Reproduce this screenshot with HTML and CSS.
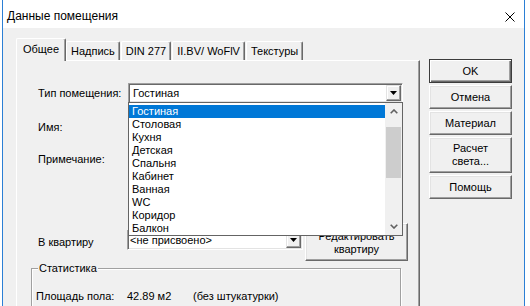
FILE: index.html
```html
<!DOCTYPE html>
<html>
<head>
  <meta charset="UTF-8" />
  <title>Данные помещения</title>
  <link rel="stylesheet" href="styles.css">
</head>
<body>
<div class="window">
  <!-- Title bar -->
  <div class="titlebar">
    <span class="title">Данные помещения</span>
    <span class="close">
      <svg width="10" height="10" viewBox="0 0 10 10"><path d="M0.5 0.5L9.5 9.5M9.5 0.5L0.5 9.5" stroke="#000" stroke-width="1" fill="none"/></svg>
    </span>
  </div>

  <div class="dialog">
    <div class="main">
      <!-- Tabs -->
      <div class="tabs">
        <div class="tab active">Общее</div>
        <div class="tab">Надпись</div>
        <div class="tab">DIN 277</div>
        <div class="tab">II.BV/ WoFlV</div>
        <div class="tab">Текстуры</div>
      </div>

      <!-- Tab page -->
      <div class="panel">
        <div class="row row-type">
          <label>Тип помещения:</label>
          <div class="combo combo-type">
            <span class="combo-text">Гостиная</span>
            <span class="combo-btn">
              <svg width="7" height="4" viewBox="0 0 7 4"><path d="M0 0H7L3.5 4Z" fill="#000"/></svg>
            </span>

            <!-- Open drop-down list -->
            <div class="dropdown">
              <ul class="options">
                <li class="selected">Гостиная</li>
                <li>Столовая</li>
                <li>Кухня</li>
                <li>Детская</li>
                <li>Спальня</li>
                <li>Кабинет</li>
                <li>Ванная</li>
                <li>WC</li>
                <li>Коридор</li>
                <li>Балкон</li>
              </ul>
              <div class="scrollbar">
                <span class="sb-arrow">
                  <svg width="8" height="5" viewBox="0 0 8 5"><path d="M0.7 4.3L4 1L7.3 4.3" fill="none" stroke="#606060" stroke-width="1.6"/></svg>
                </span>
                <span class="sb-track"><span class="sb-thumb"></span></span>
                <span class="sb-arrow">
                  <svg width="8" height="5" viewBox="0 0 8 5"><path d="M0.7 0.7L4 4L7.3 0.7" fill="none" stroke="#606060" stroke-width="1.6"/></svg>
                </span>
              </div>
            </div>
          </div>
        </div>

        <div class="row row-name">
          <label>Имя:</label>
          <div class="edit edit-name"></div>
        </div>

        <div class="row row-note">
          <label>Примечание:</label>
          <div class="edit edit-note"></div>
        </div>

        <div class="row row-flat">
          <label>В квартиру</label>
          <div class="combo combo-flat">
            <span class="combo-text">&lt;не присвоено&gt;</span>
            <span class="combo-btn">
              <svg width="7" height="4" viewBox="0 0 7 4"><path d="M0 0H7L3.5 4Z" fill="#000"/></svg>
            </span>
          </div>
          <button class="btn btn-edit">Редактировать<br>квартиру</button>
        </div>

        <!-- Statistics group -->
        <fieldset class="stats">
          <legend>Статистика</legend>
          <div class="stat-row">
            <span>Площадь пола:</span>
            <span>42.89 м2</span>
            <span>(без штукатурки)</span>
          </div>
        </fieldset>
      </div>
    </div>

    <!-- Dialog buttons -->
    <div class="actions">
      <button class="btn default">OK</button>
      <button class="btn">Отмена</button>
      <button class="btn">Материал</button>
      <button class="btn btn-tall">Расчет<br>света...</button>
      <button class="btn">Помощь</button>
    </div>
  </div>
</div>
</body>
</html>
```

FILE: styles.css
```css
html, body {
  margin: 0;
  height: 306px;
  overflow: hidden;
}
body {
  background: #fff;
  font-family: "Liberation Sans", Arial, sans-serif;
  font-size: 11px;
  color: #000;
}
.window {
  margin-left: 2px;
  width: 523px;
  height: 306px;
  box-sizing: border-box;
  border-left: 1px solid #2b7fd5;
  border-right: 1px solid #2b7fd5;
  background: #f0f0f0;
  overflow: hidden;
}

/* Title bar */
.titlebar {
  height: 28px;
  background: #fff;
  display: flex;
  align-items: center;
  justify-content: space-between;
}
.title {
  font-size: 12px;
  padding: 3px 0 0 4px;
}
.close {
  width: 28px;
  display: flex;
  justify-content: center;
  padding-top: 6px;
}

.dialog {
  display: flex;
  padding: 10px 12px 0 13px;
}
.main {
  width: 404px;
  flex: none;
}

/* Tabs */
.tabs {
  display: flex;
  align-items: flex-end;
  height: 22px;
}
.tab {
  height: 19px;
  box-sizing: border-box;
  line-height: 18px;
  padding: 0 4px;
  margin-right: 1px;
  border: 1px solid;
  border-color: #fff #696969 transparent #fff;
  border-bottom: 0;
  border-radius: 2px 2px 0 0;
  box-shadow: inset -1px 0 0 #a0a0a0;
  white-space: nowrap;
}
.tab.active {
  height: 23px;
  line-height: 20px;
  padding: 0 6px;
  margin-right: 0;
  margin-bottom: -1px;
  position: relative;
  z-index: 1;
  background: #f0f0f0;
}

/* Tab page */
.panel {
  height: 260px;
  box-sizing: border-box;
  border: 1px solid;
  border-color: #fff #696969 #696969 #fff;
  box-shadow: inset -1px -1px 0 #a0a0a0;
  padding: 22px 0 0 14px;
}
.row {
  display: flex;
  align-items: center;
  padding-left: 7px;
}
.row > label {
  width: 90px;
  flex: none;
}
.row-type { height: 20px; }
.row-name { height: 20px; margin-top: 14px; }
.row-note {
  height: 74px;
  margin-top: 12px;
  align-items: flex-start;
}
.row-note > label { line-height: 20px; }
.row-flat { height: 38px; }

/* Sunken fields */
.combo, .edit {
  box-sizing: border-box;
  background: #fff;
  border: 1px solid;
  border-color: #a0a0a0 #fff #fff #a0a0a0;
  box-shadow: inset 1px 1px 0 #696969, inset -1px -1px 0 #e3e3e3;
}
.combo {
  position: relative;
  height: 20px;
  display: flex;
  align-items: center;
  padding: 0 1px 0 4px;
}
.combo-type { width: 275px; }
.combo-flat {
  width: 176px;
  margin: 0 0 4px -1px;
  padding-left: 2px;
}
.combo-text {
  flex: 1;
  white-space: nowrap;
}
.combo-btn {
  width: 15px;
  height: 16px;
  box-sizing: border-box;
  display: flex;
  align-items: center;
  justify-content: center;
  background: #f0f0f0;
  border: 1px solid;
  border-color: #e3e3e3 #696969 #696969 #e3e3e3;
  box-shadow: inset -1px -1px 0 #a0a0a0, inset 1px 1px 0 #fff;
}
.edit-name { width: 275px; height: 20px; }
.edit-note { width: 275px; height: 66px; }

/* Open list of the room type combo */
.dropdown {
  position: absolute;
  top: 18px;
  left: -1px;
  z-index: 2;
  width: 275px;
  height: 134px;
  box-sizing: border-box;
  border: 1px solid #646464;
  background: #fff;
  display: flex;
}
.options {
  flex: 1;
  list-style: none;
  margin: 0;
  padding: 2px 0 0;
}
.options li {
  height: 13px;
  line-height: 13px;
  padding-left: 3px;
  white-space: nowrap;
}
.options li.selected {
  background: #0078d7;
  color: #fff;
}
.scrollbar {
  width: 17px;
  background: #f0f0f0;
  display: flex;
  flex-direction: column;
}
.sb-arrow {
  height: 17px;
  display: flex;
  align-items: center;
  justify-content: center;
}
.sb-track {
  flex: 1;
  padding: 7px 1px 0;
}
.sb-thumb {
  display: block;
  height: 51px;
  background: #cdcdcd;
}

/* Buttons */
.btn {
  display: block;
  box-sizing: border-box;
  width: 83px;
  height: 24px;
  padding: 0;
  margin: 0;
  font: inherit;
  line-height: 13px;
  color: #000;
  background: #f0f0f0;
  border: 1px solid;
  border-color: #fff #696969 #696969 #fff;
  box-shadow: inset -1px -1px 0 #a0a0a0, inset 1px 1px 0 #e3e3e3;
}
.btn.default {
  border-color: #3c3c3c;
  box-shadow: inset 1px 1px 0 #fff, inset -1px -1px 0 #696969, inset -2px -2px 0 #a0a0a0;
}
.btn-tall { height: 36px; }
.btn-edit {
  width: 103px;
  height: 38px;
  margin-left: 2px;
  padding-top: 2px;
}
.actions {
  width: 83px;
  margin: 21px 0 0 9px;
  display: flex;
  flex-direction: column;
  gap: 2px;
}

/* Statistics group box */
.stats {
  width: 370px;
  box-sizing: border-box;
  margin: 0;
  padding: 15px 4px 10px;
  border: 1px solid #a0a0a0;
  box-shadow: inset 1px 1px 0 #fff, 1px 1px 0 #fff;
}
.stats legend {
  margin-left: 2px;
  padding: 0 1px;
  line-height: 14px;
  background: #f0f0f0;
}
.stat-row {
  display: grid;
  grid-template-columns: 91px 66px auto;
  line-height: 13px;
}
```
